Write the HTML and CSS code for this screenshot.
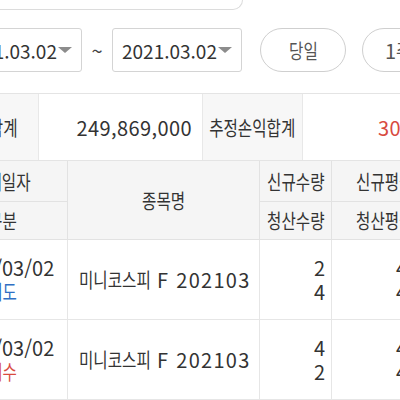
FILE: index.html
```html
<!DOCTYPE html>
<html lang="ko">
<head>
<meta charset="utf-8">
<link rel="stylesheet" href="styles.css">
</head>
<body>
<div class="page">
  <div class="top-box"></div>
  <div class="filter">
    <div class="date"><span class="date-text">2021.03.02</span><span class="caret"></span></div>
    <div class="tilde">~</div>
    <div class="date"><span class="date-text">2021.03.02</span><span class="caret"></span></div>
    <div class="pill"><span class="ko">당일</span></div>
    <div class="pill">1<span class="ko">주일</span></div>
  </div>
  <div class="summary">
    <div class="s-label"><span class="ko">약정합계</span></div>
    <div class="s-value">249,869,000</div>
    <div class="s-label"><span class="ko">추정손익합계</span></div>
    <div class="s-value red">30,200,000</div>
  </div>
  <div class="grid">
    <div class="h"><span class="ko">매매일자</span></div>
    <div class="h span"><span class="ko">종목명</span></div>
    <div class="h"><span class="ko">신규수량</span></div>
    <div class="h"><span class="ko">신규평균가</span></div>
    <div class="h"><span class="ko">구분</span></div>
    <div class="h"><span class="ko">청산수량</span></div>
    <div class="h"><span class="ko">청산평균가</span></div>

    <div class="d c1"><div>2021/03/02</div><div><span class="ko blue">매도</span></div></div>
    <div class="d name"><span class="ko lead">미니코스피</span><span class="code">F 202103</span></div>
    <div class="d num"><div>2</div><div>4</div></div>
    <div class="d num wide"><div>410.5</div><div>409.9</div></div>

    <div class="d c1"><div>2021/03/02</div><div><span class="ko red">매수</span></div></div>
    <div class="d name"><span class="ko lead">미니코스피</span><span class="code">F 202103</span></div>
    <div class="d num"><div>4</div><div>2</div></div>
    <div class="d num wide"><div>409.7</div><div>410.3</div></div>
  </div>
</div>
</body>
</html>
```

FILE: styles.css
```css
html, body {
  margin: 0;
  padding: 0;
  background: #fff;
}
body {
  width: 400px;
  height: 400px;
  overflow: hidden;
  font-family: "Noto Sans CJK KR", "Noto Sans", sans-serif;
  font-size: 20px;
  color: #333;
}
.page {
  width: 700px;
}
.ko {
  display: inline-block;
  transform: scaleX(0.78);
  white-space: nowrap;
}
.ko.lead {
  transform-origin: left center;
  margin-right: -22px;
}
.top-box {
  width: 291px;
  height: 10px;
  box-sizing: border-box;
  margin-left: -48px;
  border: 1px solid #dcdcdc;
  border-top: none;
  border-radius: 0 0 10px 10px;
}
.filter {
  display: flex;
  align-items: center;
  margin-top: 18px;
  margin-left: -48px;
  height: 44px;
}
.date {
  width: 130px;
  height: 44px;
  box-sizing: border-box;
  border: 1px solid #d4d4d4;
  border-radius: 3px;
  display: flex;
  align-items: center;
  justify-content: space-between;
  padding: 0 9px 0 9px;
  font-size: 19px;
  color: #333;
}
.caret {
  width: 0;
  height: 0;
  border-left: 7px solid transparent;
  border-right: 7px solid transparent;
  border-top: 6px solid #8c8c8c;
}
.tilde {
  width: 30px;
  text-align: center;
  color: #444;
}
.pill {
  width: 86px;
  height: 44px;
  box-sizing: border-box;
  border: 1px solid #cfcfcf;
  border-radius: 22px;
  display: flex;
  align-items: center;
  justify-content: center;
  margin-left: 18px;
  color: #555;
}
.pill + .pill {
  margin-left: 16px;
}
.pill .ko {
  margin: 0 -4px;
}
.summary {
  display: grid;
  grid-template-columns: 100px 164px 100px 190px;
  margin-top: 21px;
  margin-left: -61px;
  border-top: 1px solid #e4e4e4;
  border-bottom: 1px solid #e4e4e4;
  height: 68px;
  box-sizing: border-box;
}
.s-label {
  background: #f7f7f7;
  display: flex;
  align-items: center;
  justify-content: center;
  border-right: 1px solid #e8e8e8;
}
.s-value {
  display: flex;
  align-items: center;
  justify-content: flex-end;
  padding-right: 10px;
  border-right: 1px solid #e8e8e8;
  letter-spacing: 0.4px;
}
.red { color: #d84b3f; }
.blue { color: #2f6fc4; }
.grid {
  display: grid;
  grid-template-columns: 131px 192px 72px 120px;
  grid-template-rows: 41px 38px 80px 80px;
  margin-left: -63px;
}
.h {
  background: #f5f5f5;
  display: flex;
  align-items: center;
  justify-content: center;
  border-right: 1px solid #e2e2e2;
  border-bottom: 1px solid #e2e2e2;
}
.span {
  grid-row: span 2;
}
.d {
  border-right: 1px solid #e6e6e6;
  border-bottom: 1px solid #e6e6e6;
  display: flex;
  flex-direction: column;
  justify-content: center;
  line-height: 24px;
}
.d.c1 {
  align-items: center;
}
.name {
  flex-direction: row;
  align-items: center;
  justify-content: flex-start;
  padding-left: 11px;
  white-space: pre;
}
.code {
  margin-left: 8px;
  letter-spacing: 1.3px;
}
.num {
  align-items: flex-end;
  padding-right: 6px;
}
.num.wide {
  padding-right: 5px;
}
```
